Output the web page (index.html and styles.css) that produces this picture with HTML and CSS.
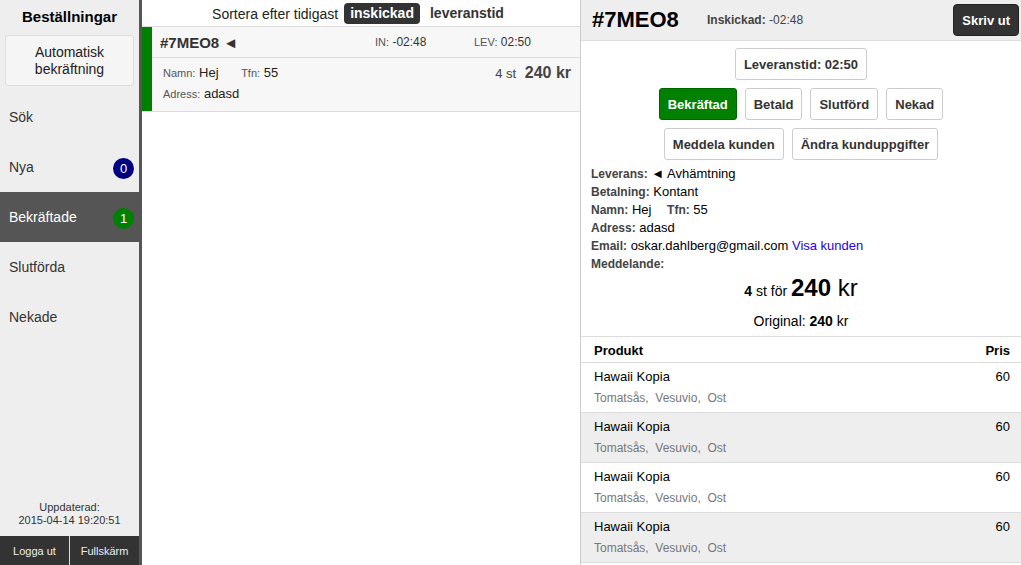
FILE: index.html
```html
<!DOCTYPE html>
<html lang="sv">
<head>
<meta charset="utf-8">
<title>Beställningar</title>
<link rel="stylesheet" href="styles.css">
</head>
<body>
<div class="app">
  <aside class="sidebar">
    <div class="side-title">Beställningar</div>
    <button class="auto-btn">Automatisk<br>bekräftning</button>
    <nav class="menu">
      <div class="menu-item">Sök</div>
      <div class="menu-item">Nya <span class="badge badge-new">0</span></div>
      <div class="menu-item active">Bekräftade <span class="badge badge-ok">1</span></div>
      <div class="menu-item">Slutförda</div>
      <div class="menu-item">Nekade</div>
    </nav>
    <div class="updated">Uppdaterad:<br>2015-04-14 19:20:51</div>
    <div class="side-actions">
      <button class="side-btn">Logga ut</button>
      <button class="side-btn">Fullskärm</button>
    </div>
  </aside>

  <main class="list">
    <div class="sortbar">
      <span>Sortera efter tidigast</span>
      <span class="sort-pill on">inskickad</span>
      <span class="sort-pill">leveranstid</span>
    </div>
    <div class="order">
      <div class="order-bar"></div>
      <div class="order-body">
        <div class="order-top">
          <div class="order-id">#7MEO8 ◄</div>
          <div class="order-time"><span class="lbl">IN:</span> -02:48</div>
          <div class="order-time"><span class="lbl">LEV:</span> 02:50</div>
        </div>
        <div class="order-info">
          <div class="order-lines">
            <div class="line"><span class="lbl">Namn:</span> Hej <span class="lbl tfn">Tfn:</span> 55</div>
            <div class="line"><span class="lbl">Adress:</span> adasd</div>
          </div>
          <div class="order-sum"><span class="qty">4 st</span> <b>240 kr</b></div>
        </div>
      </div>
    </div>
  </main>

  <section class="detail">
    <header class="detail-head">
      <div class="detail-id">#7MEO8</div>
      <div class="detail-in"><b>Inskickad:</b> -02:48</div>
      <button class="print-btn">Skriv ut</button>
    </header>
    <div class="btn-row first">
      <button class="btn">Leveranstid: 02:50</button>
    </div>
    <div class="btn-row">
      <button class="btn btn-green">Bekräftad</button>
      <button class="btn">Betald</button>
      <button class="btn">Slutförd</button>
      <button class="btn">Nekad</button>
    </div>
    <div class="btn-row">
      <button class="btn">Meddela kunden</button>
      <button class="btn">Ändra kunduppgifter</button>
    </div>
    <div class="facts">
      <div><b>Leverans:</b> ◄ Avhämtning</div>
      <div><b>Betalning:</b> Kontant</div>
      <div><b>Namn:</b> Hej <b class="tfn2">Tfn:</b> 55</div>
      <div><b>Adress:</b> adasd</div>
      <div><b>Email:</b> oskar.dahlberg@gmail.com <a class="link">Visa kunden</a></div>
      <div><b>Meddelande:</b></div>
    </div>
    <div class="total"><b>4</b> st för <span class="big"><b>240</b> kr</span></div>
    <div class="original">Original: <b>240</b> kr</div>
    <div class="table">
      <div class="trow thead"><span>Produkt</span><span>Pris</span></div>
      <div class="trow item"><div><div class="pname">Hawaii Kopia</div><div class="tops">Tomatsås,&nbsp; Vesuvio,&nbsp; Ost</div></div><span>60</span></div>
      <div class="trow item alt"><div><div class="pname">Hawaii Kopia</div><div class="tops">Tomatsås,&nbsp; Vesuvio,&nbsp; Ost</div></div><span>60</span></div>
      <div class="trow item"><div><div class="pname">Hawaii Kopia</div><div class="tops">Tomatsås,&nbsp; Vesuvio,&nbsp; Ost</div></div><span>60</span></div>
      <div class="trow item alt"><div><div class="pname">Hawaii Kopia</div><div class="tops">Tomatsås,&nbsp; Vesuvio,&nbsp; Ost</div></div><span>60</span></div>
    </div>
  </section>
</div>
</body>
</html>
```

FILE: styles.css
```css
* { box-sizing: border-box; }
html, body { margin: 0; padding: 0; height: 100%; overflow: hidden; }
body { font-family: "Liberation Sans", Arial, sans-serif; color: #222; background: #fff; }
button { font-family: inherit; cursor: pointer; }

.app { display: flex; height: 565px; overflow: hidden; }

/* Sidebar */
.sidebar {
  width: 142px; flex: none; background: #eee; border-right: 3px solid #555;
  display: flex; flex-direction: column;
}
.sidebar > * { flex-shrink: 0; }
.side-title { height: 34px; line-height: 34px; text-align: center; font-weight: bold; font-size: 15px; color: #000; }
.auto-btn {
  margin: 1px 5px 0 5px; height: 51px; background: #f5f5f5; border: 1px solid #ddd; border-radius: 3px;
  font-size: 14px; line-height: 17px; color: #222; padding: 0;
}
.menu { margin-top: 6px; display: flex; flex-direction: column; }
.menu-item {
  height: 50px; display: flex; align-items: center; justify-content: space-between;
  padding: 0 5px 0 9px; font-size: 14px; color: #333;
}
.menu-item.active { background: #555; color: #fff; }
.badge {
  width: 21px; height: 21px; border-radius: 50%; color: #fff; font-size: 13px;
  display: flex; align-items: center; justify-content: center; margin-top: 2px;
}
.badge-new { background: #000080; }
.badge-ok { background: #008000; }
.updated { margin-top: auto; text-align: center; font-size: 11px; line-height: 13px; color: #333; padding-bottom: 9px; }
.side-actions { display: flex; height: 29px; background: #333; }
.side-btn {
  flex: 1; background: #333; color: #eee; border: 0; font-size: 11px; padding: 0;
}
.side-btn + .side-btn { border-left: 1px solid #ddd; }

/* Middle list */
.list { flex: 1; border-right: 1px solid #ccc; background: #fff; }
.sortbar {
  height: 27px; border-bottom: 1px solid #ddd; display: flex; align-items: center; justify-content: center;
  font-size: 14px; color: #222; padding-top: 1px;
}
.sort-pill { font-weight: bold; color: #333; padding: 3px 6px; margin-left: 4px; border-radius: 4px; font-size: 14px; line-height: 15px; }
.sort-pill.on { background: #333; color: #fff; margin-left: 6px; }
.order { display: flex; background: #f7f7f7; border-bottom: 1px solid #ddd; height: 85px; }
.order-bar { width: 10px; background: #008000; flex: none; }
.order-body { flex: 1; }
.order-top { height: 31px; display: flex; align-items: center; border-bottom: 1px solid #ddd; padding-left: 8px; }
.order-id { width: 215px; font-weight: bold; font-size: 15px; color: #333; }
.order-time { width: 99px; font-size: 12px; color: #333; }
.lbl { font-size: 11px; color: #555; }
.order-info { display: flex; justify-content: space-between; padding: 6px 9px 0 11px; }
.line { font-size: 13px; color: #222; height: 21px; line-height: 18px; }
.line .tfn { margin-left: 19px; }
.order-sum { font-size: 13px; color: #444; line-height: 18px; }
.order-sum b { font-size: 16px; margin-left: 5px; color: #444; }

/* Detail */
.detail { width: 440px; flex: none; display: flex; flex-direction: column; overflow: hidden; }
.detail > * { flex-shrink: 0; }
.detail-head {
  height: 41px; background: #eee; border-bottom: 1px solid #ddd; display: flex; align-items: center;
  padding: 0 2px 0 11px;
}
.detail-id { font-size: 22px; font-weight: bold; color: #000; width: 115px; }
.detail-in { font-size: 12px; color: #444; flex: 1; }
.print-btn {
  height: 32px; padding: 0 8px; background: #333; color: #fff; border: 1px solid #222; border-radius: 4px;
  font-weight: bold; font-size: 13px;
}
.btn-row { display: flex; justify-content: center; gap: 8px; margin-top: 8px; }
.btn-row.first { margin-top: 7px; }
.btn {
  height: 32px; padding: 0 8px; background: #fff; border: 1px solid #ccc; border-radius: 3px;
  font-weight: bold; font-size: 13px; color: #333;
}
.btn-green { background: #008000; border-color: #006400; color: #fff; }
.facts { padding: 5px 10px 0 10px; font-size: 13px; color: #000; line-height: 18px; }
.facts b { font-size: 12px; color: #444; }
.facts .tfn2 { margin-left: 12px; }
.link { color: #2200ee; }
.total { text-align: center; font-size: 14px; color: #000; margin-top: 0; line-height: 30px; }
.total .big { font-size: 24px; }
.original { text-align: center; font-size: 14px; color: #000; margin-top: 5px; line-height: 20px; }
.table { margin-top: 5px; border-top: 1px solid #ddd; }
.trow { display: flex; justify-content: space-between; padding: 0 11px 0 13px; border-bottom: 1px solid #ddd; }
.thead { height: 26px; align-items: center; font-weight: bold; font-size: 13px; color: #000; padding-top: 2px; }
.item { height: 50px; padding-top: 6px; font-size: 13px; color: #000; }
.item.alt { background: #eee; }
.pname { line-height: 16px; }
.tops { font-size: 12px; color: #777; margin-top: 6px; line-height: 14px; }
```
